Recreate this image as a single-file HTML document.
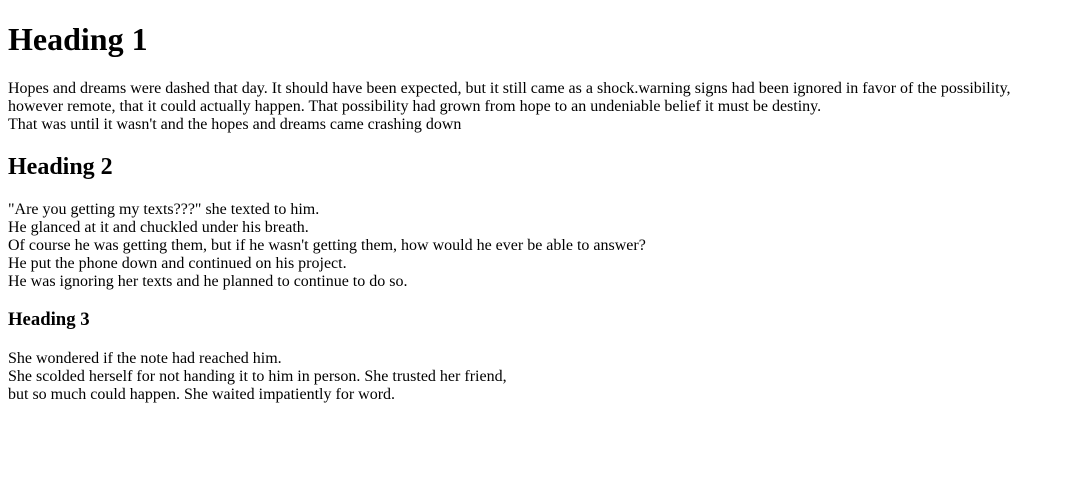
<!DOCTYPE html>
<html>
<head>
<meta charset="utf-8">
<style>
body{margin:8px;font-family:"Liberation Serif",serif;font-size:16px;color:#000;background:#fff;}
p{white-space:nowrap;}
</style>
</head>
<body>
<h1>Heading 1</h1>
<p>Hopes and dreams were dashed that day. It should have been expected, but it still came as a shock.warning signs had been ignored in favor of the possibility,<br>however remote, that it could actually happen. That possibility had grown from hope to an undeniable belief it must be destiny.<br>That was until it wasn't and the hopes and dreams came crashing down</p>
<h2>Heading 2</h2>
<p>"Are you getting my texts???" she texted to him.<br>He glanced at it and chuckled under his breath.<br>Of course he was getting them, but if he wasn't getting them, how would he ever be able to answer?<br>He put the phone down and continued on his project.<br>He was ignoring her texts and he planned to continue to do so.</p>
<h3>Heading 3</h3>
<p>She wondered if the note had reached him.<br>She scolded herself for not handing it to him in person. She trusted her friend,<br>but so much could happen. She waited impatiently for word.</p>
</body>
</html>
